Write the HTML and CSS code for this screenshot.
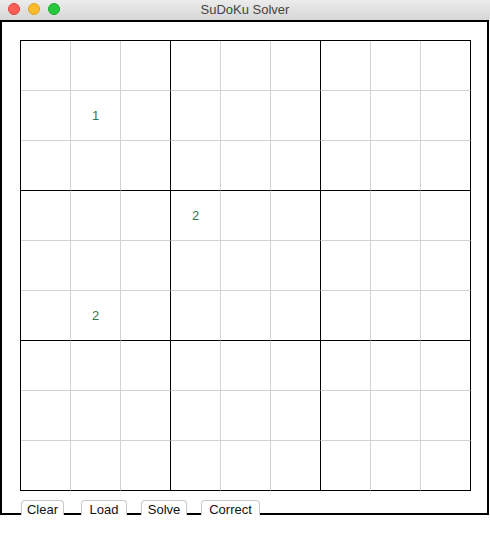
FILE: index.html
```html
<!DOCTYPE html>
<html>
<head>
<meta charset="utf-8">
<link rel="stylesheet" href="styles.css">
</head>
<body>
<div class="titlebar">
  <div class="lights">
    <span class="light red"></span>
    <span class="light yellow"></span>
    <span class="light green"></span>
  </div>
  <div class="title">SuDoKu Solver</div>
</div>
<div class="window">
  <div class="board">
    <div class="cell"></div><div class="cell"></div><div class="cell"></div><div class="cell"></div><div class="cell"></div><div class="cell"></div><div class="cell"></div><div class="cell"></div><div class="cell"></div>
    <div class="cell"></div><div class="cell">1</div><div class="cell"></div><div class="cell"></div><div class="cell"></div><div class="cell"></div><div class="cell"></div><div class="cell"></div><div class="cell"></div>
    <div class="cell"></div><div class="cell"></div><div class="cell"></div><div class="cell"></div><div class="cell"></div><div class="cell"></div><div class="cell"></div><div class="cell"></div><div class="cell"></div>
    <div class="cell"></div><div class="cell"></div><div class="cell"></div><div class="cell">2</div><div class="cell"></div><div class="cell"></div><div class="cell"></div><div class="cell"></div><div class="cell"></div>
    <div class="cell"></div><div class="cell"></div><div class="cell"></div><div class="cell"></div><div class="cell"></div><div class="cell"></div><div class="cell"></div><div class="cell"></div><div class="cell"></div>
    <div class="cell"></div><div class="cell">2</div><div class="cell"></div><div class="cell"></div><div class="cell"></div><div class="cell"></div><div class="cell"></div><div class="cell"></div><div class="cell"></div>
    <div class="cell"></div><div class="cell"></div><div class="cell"></div><div class="cell"></div><div class="cell"></div><div class="cell"></div><div class="cell"></div><div class="cell"></div><div class="cell"></div>
    <div class="cell"></div><div class="cell"></div><div class="cell"></div><div class="cell"></div><div class="cell"></div><div class="cell"></div><div class="cell"></div><div class="cell"></div><div class="cell"></div>
    <div class="cell"></div><div class="cell"></div><div class="cell"></div><div class="cell"></div><div class="cell"></div><div class="cell"></div><div class="cell"></div><div class="cell"></div><div class="cell"></div>
  </div>
  <div class="footer">
    <span class="seg seg-a"></span>
    <button class="btn btn-clear">Clear</button>
    <span class="seg seg-b"></span>
    <button class="btn btn-load">Load</button>
    <span class="seg seg-c"></span>
    <button class="btn btn-solve">Solve</button>
    <span class="seg seg-c"></span>
    <button class="btn btn-correct">Correct</button>
    <span class="seg seg-rest"></span>
  </div>
</div>
</body>
</html>
```

FILE: styles.css
```css
html, body {
  margin: 0;
  padding: 0;
  background: #ffffff;
}

body {
  width: 490px;
  height: 550px;
  font-family: "Liberation Sans", Arial, sans-serif;
}

.titlebar {
  position: relative;
  height: 20px;
  background: linear-gradient(#ececec, #d6d6d6);
  display: flex;
  align-items: center;
  justify-content: center;
}

.lights {
  position: absolute;
  left: 8px;
  top: 3px;
  display: flex;
  gap: 8px;
}

.light {
  width: 12px;
  height: 12px;
  border-radius: 50%;
  box-sizing: border-box;
}

.red { background: #fc5f57; border: 1px solid #e0443e; }
.yellow { background: #fdbc2e; border: 1px solid #dea123; }
.green { background: #28c840; border: 1px solid #1aab29; }

.title {
  font-size: 13px;
  color: #444444;
  line-height: 20px;
  margin-top: -1px;
}

.window {
  width: 489px;
  box-sizing: border-box;
  border: 2px solid #000;
  border-bottom: none;
  padding: 18px 18px 0 18px;
}

.board {
  display: grid;
  grid-template-columns: repeat(9, 50px);
  grid-auto-rows: 50px;
  width: 451px;
  border-left: 1px solid #000;
  border-top: 1px solid #000;
  box-sizing: border-box;
}

.cell {
  box-sizing: border-box;
  border-right: 1px solid #d2d2d2;
  border-bottom: 1px solid #d2d2d2;
  display: flex;
  align-items: center;
  justify-content: center;
  font-size: 13px;
  color: #2f7a50;
}

.cell:nth-child(9n+3),
.cell:nth-child(9n+6),
.cell:nth-child(9n) {
  border-right-color: #000;
}

.cell:nth-child(n+19):nth-child(-n+27),
.cell:nth-child(n+46):nth-child(-n+54),
.cell:nth-child(n+73) {
  border-bottom-color: #000;
}

.footer {
  display: flex;
  align-items: flex-end;
  height: 15px;
  margin: 9px -18px 0 -18px;
}

.seg {
  height: 2px;
  background: #000;
  flex: none;
}

.seg-a { width: 19px; }
.seg-b { width: 17px; }
.seg-c { width: 14px; }
.seg-rest { flex: 1; }

.btn {
  flex: none;
  height: 15px;
  box-sizing: border-box;
  border: 1px solid #c9c9c9;
  border-bottom: none;
  border-radius: 4px 4px 0 0;
  background: #ffffff;
  font-family: "Liberation Sans", Arial, sans-serif;
  font-size: 13px;
  color: #111;
  padding: 3px 0 0 0;
  margin: 0;
  line-height: 12px;
  text-align: center;
}

.btn-clear { width: 43px; }
.btn-load { width: 46px; }
.btn-solve { width: 46px; }
.btn-correct { width: 59px; }
```
